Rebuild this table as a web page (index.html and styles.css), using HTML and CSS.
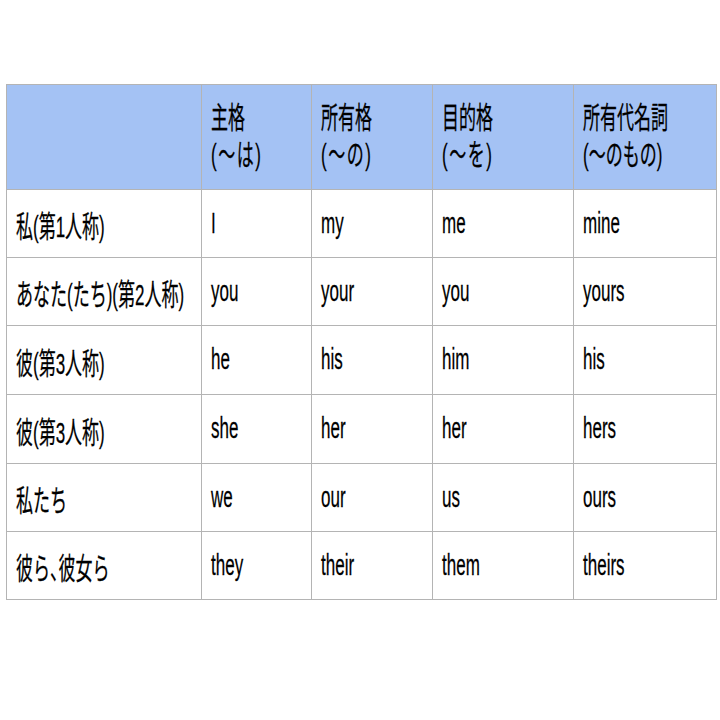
FILE: index.html
```html
<!DOCTYPE html>
<html lang="ja">
<head>
<meta charset="utf-8">
<title>人称代名詞</title>
<link rel="stylesheet" href="styles.css">
</head>
<body>
<div class="page">
  <table class="grid">
    <colgroup>
      <col class="c1"><col class="c2"><col class="c3"><col class="c4"><col class="c5">
    </colgroup>
    <thead>
      <tr class="head">
        <th></th>
        <th><span class="t">主格<br><span class="sub">(～は)</span></span></th>
        <th><span class="t">所有格<br><span class="sub">(～の)</span></span></th>
        <th><span class="t">目的格<br><span class="sub">(～を)</span></span></th>
        <th><span class="t">所有代名詞<br>(～のもの)</span></th>
      </tr>
    </thead>
    <tbody>
      <tr class="r68"><td><span class="t">私(第1人称)</span></td><td><span class="t">I</span></td><td><span class="t">my</span></td><td><span class="t">me</span></td><td><span class="t">mine</span></td></tr>
      <tr class="r68"><td><span class="t">あなた(たち)(第2人称)</span></td><td><span class="t">you</span></td><td><span class="t">your</span></td><td><span class="t">you</span></td><td><span class="t">yours</span></td></tr>
      <tr class="r69"><td><span class="t">彼(第3人称)</span></td><td><span class="t">he</span></td><td><span class="t">his</span></td><td><span class="t">him</span></td><td><span class="t">his</span></td></tr>
      <tr class="r69"><td><span class="t">彼(第3人称)</span></td><td><span class="t">she</span></td><td><span class="t">her</span></td><td><span class="t">her</span></td><td><span class="t">hers</span></td></tr>
      <tr class="r68"><td><span class="t">私たち</span></td><td><span class="t">we</span></td><td><span class="t">our</span></td><td><span class="t">us</span></td><td><span class="t">ours</span></td></tr>
      <tr class="r68"><td><span class="t">彼ら<span class="half">、</span>彼女ら</span></td><td><span class="t">they</span></td><td><span class="t">their</span></td><td><span class="t">them</span></td><td><span class="t">theirs</span></td></tr>
    </tbody>
  </table>
</div>
</body>
</html>
```
FILE: styles.css
```css
html, body {
  margin: 0;
  padding: 0;
  background: #ffffff;
}
.page {
  padding: 84px 0 0 6px;
  font-family: "Liberation Sans", "Noto Sans CJK JP", sans-serif;
  font-size: 17px;
  color: #000000;
}
.grid {
  border-collapse: collapse;
  table-layout: fixed;
  width: 710px;
}
.c1 { width: 195px; }
.c2 { width: 110px; }
.c3 { width: 121px; }
.c4 { width: 141px; }
.c5 { width: 143px; }
.grid th,
.grid td {
  border: 1px solid #b4b4b4;
  padding: 0 0 0 9px;
  text-align: left;
  vertical-align: middle;
  font-weight: normal;
  white-space: nowrap;
  overflow: visible;
}
.head th {
  background: #a4c2f4;
  height: 104px;
  line-height: 21px;
}
.r68 td { height: 67px; }
.r69 td { height: 68px; }
.t {
  display: inline-block;
  transform: scaleY(1.75);
  transform-origin: left center;
  -webkit-text-stroke: 0.15px #000;
}
.sub {
  letter-spacing: 1.5px;
}
.half {
  font-feature-settings: "halt";
}
```
